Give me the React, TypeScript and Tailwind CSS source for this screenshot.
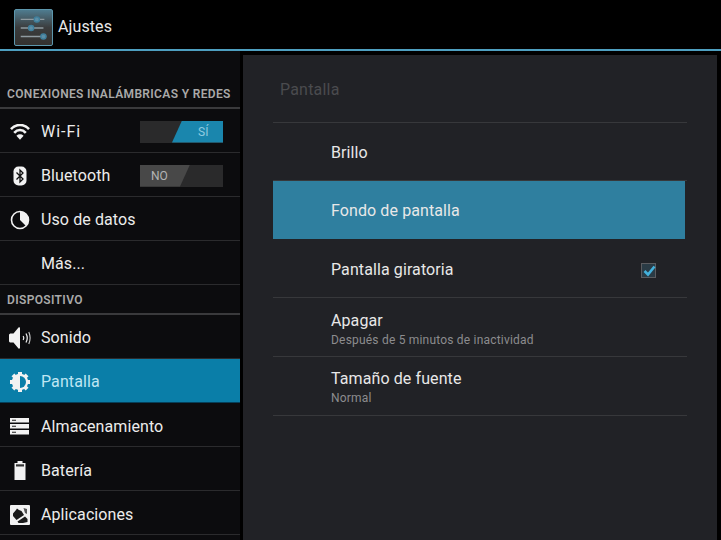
import type { ReactNode } from "react";

function SettingsIcon() {
  return (
    <div className="h-[37px] w-[39px] rounded-[2px] border border-[#5d97ad] bg-gradient-to-b from-[#4e7c90] via-[#3b3d3e] to-[#33312f]">
      <svg viewBox="0 0 39 37" className="h-full w-full" fill="none" stroke="#8f9aa0" strokeWidth="1.4">
        <path d="M6 10H31M6 19H30M6 28H33" />
        <circle cx="23" cy="10" r="2.700" fill="#5c8ea6" stroke="#3f7f9c" strokeWidth="1.500" />
        <circle cx="17" cy="19" r="2.700" fill="#5c8ea6" stroke="#3f7f9c" strokeWidth="1.500" />
        <circle cx="30" cy="28" r="2.700" fill="#5c8ea6" stroke="#3f7f9c" strokeWidth="1.500" />
      </svg>
    </div>
  );
}

const icons: Record<string, ReactNode> = {
  wifi: (
    <svg viewBox="0 0 20 16" className="h-[16px] w-[20px]" fill="none" stroke="#f2f2f2" strokeWidth="2.600">
      <path d="M1 5.200C6-.4 14-.4 19 5.200" />
      <path d="M4.200 8.800C7.600 5 12.400 5 15.800 8.800" />
      <path d="M6.400 11.700L10 15.800L13.600 11.700C11.400 9.900 8.600 9.900 6.400 11.700Z" fill="#f2f2f2" stroke="none" />
    </svg>
  ),
  bluetooth: (
    <svg viewBox="0 0 14 20" className="h-[20px] w-[14px]">
      <rect x="0.500" y="0.500" width="13" height="19" rx="5" fill="#f2f2f2" />
      <path d="M3.500 6.500L10 13L7 16V4L10 7L3.500 13.500" fill="none" stroke="#111" strokeWidth="1.300" />
    </svg>
  ),
  data: (
    <svg viewBox="0 0 20 20" className="h-[20px] w-[20px]">
      <circle cx="10" cy="10" r="8.500" fill="#0c0c0e" stroke="#f2f2f2" strokeWidth="1.600" />
      <path d="M10 1.500A8.500 8.500 0 0 1 16 16L10 10Z" fill="#f2f2f2" />
    </svg>
  ),
  sound: (
    <svg viewBox="0 0 22 22" className="h-[22px] w-[22px]" fill="none">
      <path d="M0 8C0 7 1 6.500 2 6.500H4.500L9.500 0.500C10.500 0 11 0.500 11 1.500V20.500C11 21.500 10.500 22 9.500 21.500L4.500 15.500H2C1 15.500 0 15 0 14Z" fill="#f2f2f2" />
      <path d="M14.200 9Q15.400 11 14.200 13" stroke="#e8e8e8" strokeWidth="1.300" />
      <path d="M17 6.500Q19.500 11 17 15.500" stroke="#e8e8e8" strokeWidth="1.300" />
      <path d="M19.800 5Q22.400 11 19.800 17" stroke="#cfcfcf" strokeWidth="1.100" />
    </svg>
  ),
  display: (
    <svg viewBox="0 0 20 20" className="h-[20px] w-[20px]">
      <g fill="#f2f2f2">
        <circle cx="10" cy="10" r="8.200" />
        <rect x="8" y="0" width="4" height="20" />
        <rect x="0" y="8" width="20" height="4" />
        <rect x="8" y="0" width="4" height="20" transform="rotate(45 10 10)" />
        <rect x="8" y="0" width="4" height="20" transform="rotate(-45 10 10)" />
      </g>
      <path d="M10 4A6 6 0 0 1 10 16Z" fill="#0a7ea8" />
    </svg>
  ),
  storage: (
    <svg viewBox="0 0 20 17" className="h-[17px] w-[20px]" fill="#f2f2f2">
      <rect y="0" width="19" height="4.500" />
      <rect y="6" width="19" height="4.500" />
      <rect y="12" width="19" height="4.500" />
      <path d="M2 1.800H6V2.800H2ZM2 7.800H6V8.800H2ZM2 13.800H6V14.800H2Z" fill="#222" />
    </svg>
  ),
  battery: (
    <svg viewBox="0 0 12 19" className="h-[19px] w-[12px]">
      <path d="M3.500 0H8.500V2H11.500V19H0.500V2H3.500Z" fill="#f2f2f2" />
      <path d="M2 3.300H10V5.500H2Z" fill="#333" />
    </svg>
  ),
  apps: (
    <svg viewBox="0 0 20 20" className="h-[20px] w-[20px]">
      <rect width="20" height="20" rx="1" fill="#f2f2f2" />
      <path d="M3 8.500L6 5L7 3.500L9 5L11.500 6L14 10L6.500 15L3 11Z" fill="#1a1a1a" />
      <path d="M7.500 16.500L15 11.500L17.500 14V17L13 18H8.500Z" fill="#1a1a1a" />
      <path d="M13.500 3L17 4V9L15 8Z" fill="#555" />
    </svg>
  ),
};

function Toggle({ on }: { on: boolean }) {
  return (
    <div className="relative h-[22px] w-[83px] overflow-hidden bg-[#2a2a2b] text-[12px] leading-[22px]">
      {on ? (
        <div className="absolute inset-y-0 right-0 w-[51px] bg-[#1a86ad] pl-[26px] text-[#8fcbe0] [clip-path:polygon(10px_0,100%_0,100%_100%,0_100%)]">
          SÍ
        </div>
      ) : (
        <div className="absolute inset-y-0 left-0 w-[50px] bg-[#484848] pl-[11px] text-[#b4b4b4] [clip-path:polygon(0_0,100%_0,calc(100%-10px)_100%,0_100%)]">
          NO
        </div>
      )}
    </div>
  );
}

function NavRow({
  label,
  icon,
  toggle,
  active,
  labelClass = "tracking-[0.1px]",
  top = "pt-[2px]",
}: {
  label: string;
  icon?: string;
  toggle?: boolean;
  active?: boolean;
  labelClass?: string;
  top?: string;
}) {
  return (
    <div
      className={`flex h-[44px] items-center border-b pr-[17px] ${top} ${
        active ? "border-[#06405a] bg-[#0a7ea8] text-[#bfe6f3]" : "border-[#2b2b2d] text-[#ececec]"
      }`}
    >
      <div className="flex w-[41px] shrink-0 justify-center pr-[2px]">{icon ? icons[icon] : null}</div>
      <span className={`flex-1 text-[16px] ${labelClass}`}>{label}</span>
      {toggle !== undefined ? <Toggle on={toggle} /> : null}
    </div>
  );
}

function SectionLabel({ children, className }: { children: string; className: string }) {
  return (
    <div
      className={`flex items-end border-b-2 border-[#3a3a3c] pb-[4px] pl-[7px] text-[12px] font-semibold tracking-[0.35px] text-[#a9a9a9] ${className}`}
    >
      {children}
    </div>
  );
}

function PanelRow({
  title,
  sub,
  active,
  check,
  height = "h-[59px]",
  top = "pt-[2px]",
}: {
  title: string;
  sub?: string;
  active?: boolean;
  check?: boolean;
  height?: string;
  top?: string;
}) {
  return (
    <div
      className={`flex items-center pl-[58px] pr-[31px] ${top} ${height} ${
        active ? "mr-[2px] bg-[#2f7f9f]" : "border-b border-[#37383b]"
      }`}
    >
      <div className="flex-1">
        <div className="text-[16px] leading-[20px] tracking-[0.1px] text-[#e8e8e8]">{title}</div>
        {sub ? <div className="text-[12px] leading-[18px] tracking-[0.2px] text-[#8c8c8e]">{sub}</div> : null}
      </div>
      {check ? (
        <div className="h-[15px] w-[15px] border border-[#5b5c60] bg-[#2a3b45]">
          <svg viewBox="0 0 15 15" className="h-[15px] w-[15px]" fill="none">
            <path d="M2.500 7L6 10.500L12.500 2.500" stroke="#43b1dc" strokeWidth="2.600" />
          </svg>
        </div>
      ) : null}
    </div>
  );
}

export default function App() {
  return (
    <div className="flex h-[540px] w-[721px] flex-col overflow-hidden bg-black font-['Roboto',sans-serif]">
      <header className="flex h-[51px] shrink-0 items-center gap-[5px] border-b-2 border-[#4e9fc0] pt-[5px] pl-[14px]">
        <SettingsIcon />
        <span className="text-[16px] tracking-[0.1px] text-[#e8e8e8]">Ajustes</span>
      </header>
      <div className="flex min-h-0 flex-1">
        <nav className="w-[240px] shrink-0 bg-[#0c0c0e]">
          <SectionLabel className="h-[58px]">CONEXIONES INALÁMBRICAS Y REDES</SectionLabel>
          <NavRow label="Wi-Fi" icon="wifi" toggle labelClass="tracking-[1px]" />
          <NavRow label="Bluetooth" icon="bluetooth" toggle={false} />
          <NavRow label="Uso de datos" icon="data" />
          <NavRow label="Más..." />
          <SectionLabel className="h-[30px]">DISPOSITIVO</SectionLabel>
          <NavRow label="Sonido" icon="sound" />
          <NavRow label="Pantalla" icon="display" active />
          <NavRow label="Almacenamiento" icon="storage" top="pt-[4px]" />
          <NavRow label="Batería" icon="battery" top="pt-[4px]" />
          <NavRow label="Aplicaciones" icon="apps" top="pt-[4px]" />
        </nav>
        <main className="ml-[3px] mr-[4px] mt-[4px] flex-1 bg-[#212226] pl-[30px] pr-[30px]">
          <div className="flex h-[68px] items-center border-b border-[#37383b] pt-[3px] pl-[7px] text-[16px] tracking-[0.2px] text-[#4a4b4e]">
            Pantalla
          </div>
          <PanelRow title="Brillo" height="h-[58px]" />
          <PanelRow title="Fondo de pantalla" active height="h-[58px]" />
          <PanelRow title="Pantalla giratoria" check top="pt-[4px]" />
          <PanelRow title="Apagar" sub="Después de 5 minutos de inactividad" top="pt-[5px]" />
          <PanelRow title="Tamaño de fuente" sub="Normal" top="pt-[4px]" />
        </main>
      </div>
    </div>
  );
}
